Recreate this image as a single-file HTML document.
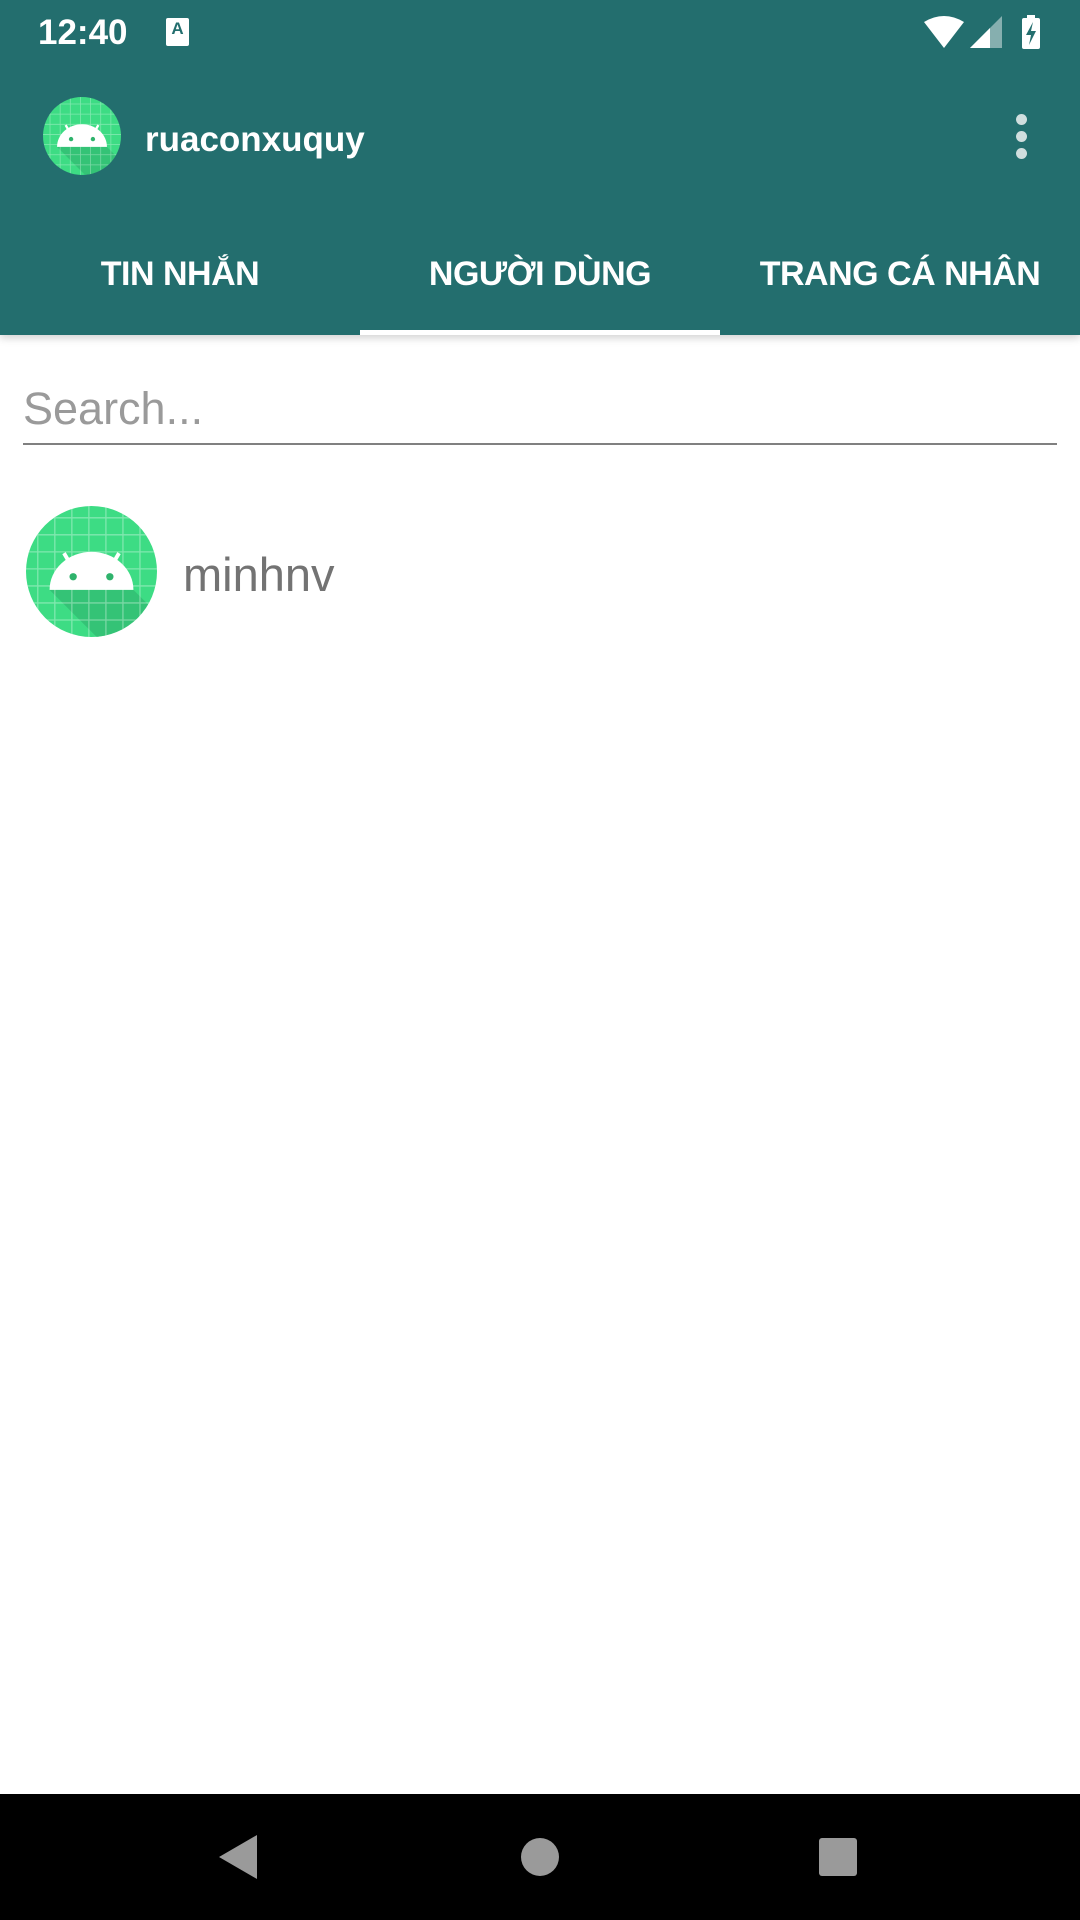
<!DOCTYPE html>
<html><head><meta charset="utf-8"><style>
*{margin:0;padding:0;box-sizing:border-box}
body{width:1080px;height:1920px;background:#fff;position:relative;overflow:hidden;font-family:"Liberation Sans","DejaVu Sans",sans-serif}
.top{position:absolute;left:0;top:0;width:1080px;height:335px;background:#236e6e;box-shadow:0 3px 8px rgba(0,0,0,.18)}
.abs{position:absolute}
.tab{position:absolute;top:255px;width:360px;text-align:center;color:#fff;font-weight:bold;font-size:34px;letter-spacing:-0.5px}
</style></head><body>
<svg width="0" height="0" style="position:absolute"><defs>
<clipPath id="cc"><circle cx="50" cy="50" r="50"/></clipPath>
<g id="andr">
<g clip-path="url(#cc)">
<rect width="100" height="100" fill="#3ddc84"/>
<path d="M18 64 L82 64 L110 92 L110 110 L64 110 Z" fill="#2fb36c" opacity=".6"/>
<g stroke="#fff" stroke-opacity=".35" stroke-width="1">
<path d="M0 9H100M0 22H100M0 35H100M0 48H100M0 61H100M0 74H100M0 87H100M9 0V100M22 0V100M35 0V100M48 0V100M61 0V100M74 0V100M87 0V100"/>
</g>
<path d="M18 64 A32 29 0 0 1 82 64 Z" fill="#fff"/>
<path d="M29 36 L36 48 M71 36 L64 48" stroke="#fff" stroke-width="3"/>
<circle cx="36" cy="54" r="2.8" fill="#2fb36c"/><circle cx="64" cy="54" r="2.8" fill="#2fb36c"/>
</g></g></defs></svg>
<div class="top"></div>
<div class="abs" style="left:38px;top:13px;color:#fff;font-size:35px;font-weight:bold">12:40</div>
<div class="abs" style="left:166px;top:18px;width:23px;height:28px;background:#fff;border-radius:2px;color:#236e6e;font-size:17px;font-weight:bold;text-align:center;line-height:22px">A</div>
<svg class="abs" style="left:920px;top:14px" width="125" height="36" viewBox="0 0 125 36">
<path d="M4 8 Q24 -4 44 8 L24 34 Z" fill="#fff"/>
<path d="M50 34 L82 2 L82 34 Z" fill="#fff" opacity=".45"/>
<path d="M50 34 L70 14 L70 34 Z" fill="#fff"/>
<rect x="102" y="4" width="18" height="31" rx="2" fill="#fff"/><rect x="107" y="1" width="8" height="4" fill="#fff"/>
<path d="M113 8 L106 21 L111 21 L109 31 L116 17 L111 17 Z" fill="#236e6e"/>
</svg>
<svg class="abs" style="left:43px;top:97px" width="78" height="78" viewBox="0 0 100 100"><use href="#andr"/></svg>
<div class="abs" style="left:145px;top:120px;color:#fff;font-size:35px;font-weight:bold">ruaconxuquy</div>
<div class="abs" style="left:1016px;top:114px;width:11px;height:11px;border-radius:50%;background:#d0dede"></div>
<div class="abs" style="left:1016px;top:131px;width:11px;height:11px;border-radius:50%;background:#d0dede"></div>
<div class="abs" style="left:1016px;top:148px;width:11px;height:11px;border-radius:50%;background:#d0dede"></div>
<div class="tab" style="left:0">TIN NHẮN</div>
<div class="tab" style="left:360px">NGƯỜI DÙNG</div>
<div class="tab" style="left:720px">TRANG CÁ NHÂN</div>
<div class="abs" style="left:360px;top:330px;width:360px;height:5px;background:#fff"></div>
<div class="abs" style="left:23px;top:383px;color:#9a9a9a;font-size:45px">Search...</div>
<div class="abs" style="left:23px;top:443px;width:1034px;height:2px;background:#808080"></div>
<svg class="abs" style="left:26px;top:506px" width="131" height="131" viewBox="0 0 100 100"><use href="#andr"/></svg>
<div class="abs" style="left:183px;top:547px;color:#737373;font-size:47px">minhnv</div>
<div class="abs" style="left:0;top:1794px;width:1080px;height:126px;background:#000"></div>
<svg class="abs" style="left:0;top:1794px" width="1080" height="126">
<path d="M219 63 L257 41 L257 85 Z" fill="#9a9a9a"/>
<circle cx="540" cy="63" r="19" fill="#9a9a9a"/>
<rect x="819" y="44" width="38" height="38" rx="3" fill="#9a9a9a"/>
</svg>
</body></html>
